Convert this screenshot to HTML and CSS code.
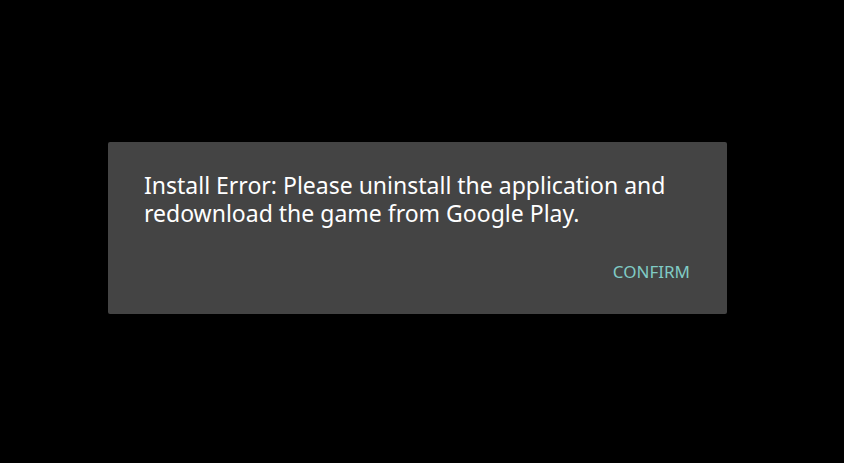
FILE: index.html
```
<!DOCTYPE html>
<html>
<head>
<meta charset="utf-8">
<link rel="stylesheet" href="styles.css">
</head>
<body>
<div class="dialog">
  <p class="message">Install Error: Please uninstall the application and redownload the game from Google Play.</p>
  <div class="actions"><span class="confirm">CONFIRM</span></div>
</div>
</body>
</html>
```
FILE: styles.css
```
html, body {
  margin: 0;
  padding: 0;
  background: #000;
  width: 844px;
  height: 463px;
  overflow: hidden;
  font-family: "Noto Sans", "Open Sans", sans-serif;
}
.dialog {
  margin: 142px 0 0 108px;
  width: 619px;
  height: 172px;
  box-sizing: border-box;
  background: #444444;
  border-radius: 2px;
  padding: 29px 37px 0 36px;
}
.message {
  margin: 0;
  color: #ffffff;
  font-size: 23px;
  line-height: 28px;
}
.actions {
  display: flex;
  justify-content: flex-end;
  margin-top: 35px;
}
.confirm {
  color: #80cbc4;
  font-size: 17px;
  line-height: 20px;
}
```
